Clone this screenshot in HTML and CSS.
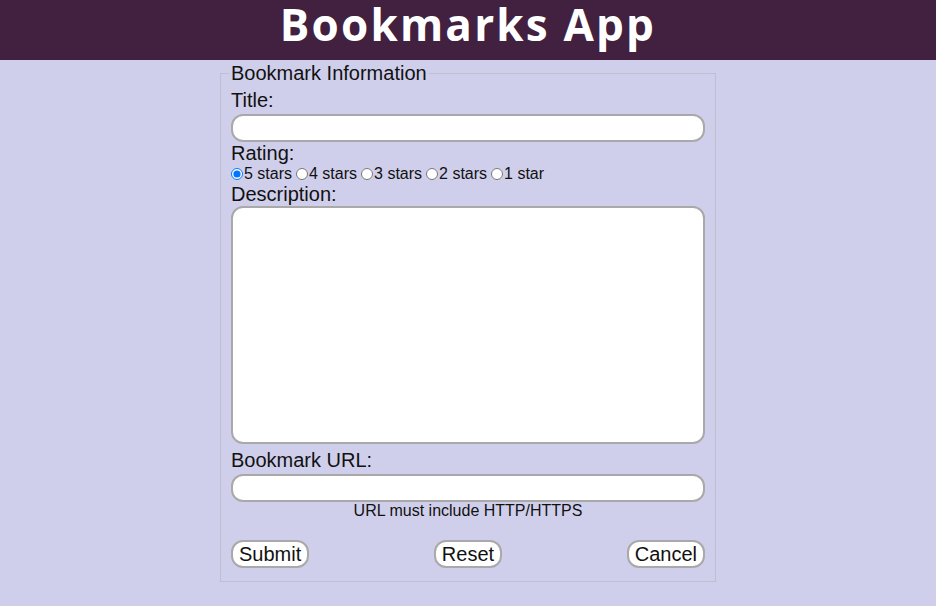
FILE: index.html
```html
<!DOCTYPE html>
<html lang="en">
<head>
<meta charset="utf-8">
<title>Bookmarks App</title>
<link rel="stylesheet" href="styles.css">
</head>
<body>
<header class="top">
  <h1 class="title">Bookmarks App</h1>
</header>
<main class="main">
  <form class="form">
    <fieldset class="box">
      <legend class="legend">Bookmark Information</legend>
      <label class="lbl" for="t">Title:</label>
      <input class="field" id="t" type="text">
      <div class="lbl">Rating:</div>
      <div class="rating">
        <label class="opt"><input class="radio" type="radio" name="r" checked>5 stars</label>
        <label class="opt"><input class="radio" type="radio" name="r">4 stars</label>
        <label class="opt"><input class="radio" type="radio" name="r">3 stars</label>
        <label class="opt"><input class="radio" type="radio" name="r">2 stars</label>
        <label class="opt"><input class="radio" type="radio" name="r">1 star</label>
      </div>
      <label class="lbl" for="d">Description:</label>
      <textarea class="area" id="d"></textarea>
      <label class="lbl" for="u">Bookmark URL:</label>
      <input class="field" id="u" type="text">
      <p class="note">URL must include HTTP/HTTPS</p>
      <div class="actions">
        <button class="btn" type="button">Submit</button>
        <button class="btn" type="button">Reset</button>
        <button class="btn" type="button">Cancel</button>
      </div>
    </fieldset>
  </form>
</main>
</body>
</html>
```
FILE: styles.css
```css
html, body {
  margin: 0;
  padding: 0;
  background: #d0cfeb;
  font-family: "Liberation Sans", Arial, sans-serif;
  color: #111;
}
.top {
  background: #42203f;
  height: 60px;
  display: flex;
  align-items: flex-start;
  justify-content: center;
}
.title {
  margin: 0;
  color: #fff;
  font-family: "Open Sans", sans-serif;
  font-weight: 700;
  font-size: 44px;
  line-height: 48px;
  letter-spacing: 2.2px;
}
.main {
  display: flex;
  justify-content: center;
}
.form {
  margin: 0;
}
.box {
  width: 474px;
  margin: 2px 0 0 0;
  padding: 4px 10px 13px 10px;
  border: 1px solid #bfbfcf;
  font-size: 20px;
}
.legend {
  padding: 0 2px;
  margin-left: -2px;
  font-size: 20px;
  line-height: 23px;
}
.lbl {
  display: block;
  font-size: 20px;
  line-height: 23px;
}
.field {
  display: block;
  box-sizing: border-box;
  width: 474px;
  height: 28px;
  margin: 2px 0 0 0;
  border: 2px solid #a9a9a9;
  border-radius: 12px;
  background: #fff;
}
.rating {
  display: flex;
  align-items: center;
  font-size: 16px;
  line-height: 18px;
}
.opt {
  display: flex;
  align-items: center;
  margin-right: 4px;
}
.radio {
  width: 12px;
  height: 12px;
  margin: 0 1px 0 0;
}
.area {
  display: block;
  box-sizing: border-box;
  width: 474px;
  height: 238px;
  margin: 0 0 5px 0;
  border: 2px solid #a9a9a9;
  border-radius: 12px;
  background: #fff;
  resize: none;
}
.note {
  margin: 0;
  text-align: center;
  font-size: 16px;
  line-height: 18px;
}
.actions {
  display: flex;
  justify-content: space-between;
  margin-top: 20px;
}
.btn {
  font-family: "Liberation Sans", Arial, sans-serif;
  font-size: 20px;
  height: 28px;
  padding: 0 6px;
  border: 2px solid #a9a9a9;
  border-radius: 12px;
  background: #fff;
  color: #111;
}
```
